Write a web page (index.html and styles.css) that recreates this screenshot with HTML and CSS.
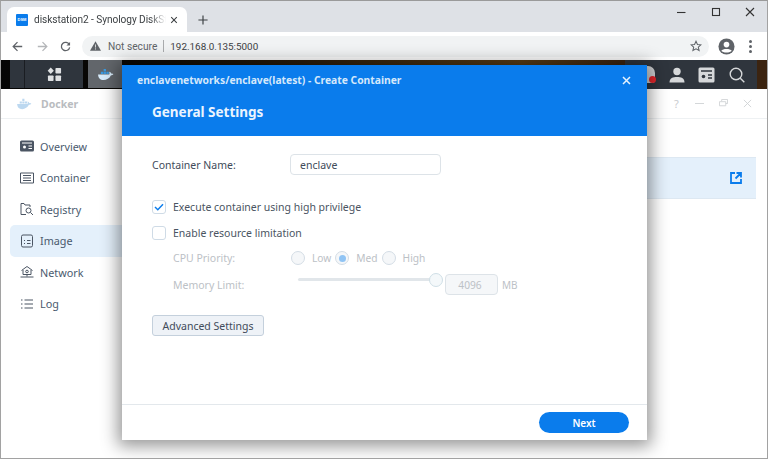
FILE: index.html
```html
<!DOCTYPE html>
<html lang="en">
<head>
<meta charset="utf-8">
<title>Create Container</title>
<link rel="stylesheet" href="styles.css">
</head>
<body>
<div class="frame">
  <div class="tabstrip">
    <div class="tab">
      <span class="favicon">DSM</span>
      <span class="tab-title">diskstation2 - Synology DiskStation</span>
      <svg class="tab-close" viewBox="0 0 10 10"><path d="M1.5 1.5l7 7M8.5 1.5l-7 7"/></svg>
    </div>
    <svg class="newtab" viewBox="0 0 12 12"><path d="M6 .5v11M.5 6h11"/></svg>
    <div class="winctl">
      <svg viewBox="0 0 10 10"><path d="M1 5.500h8.500"/></svg>
      <svg viewBox="0 0 10 10"><rect x="1.500" y="1.500" width="7" height="7"/></svg>
      <svg viewBox="0 0 10 10"><path d="M1 1l8 8M9 1l-8 8"/></svg>
    </div>
  </div>
  <div class="toolbar">
    <svg class="nav" viewBox="0 0 14 14"><path d="M13 7H2M7 1.500L1.500 7 7 12.500"/></svg>
    <svg class="nav dim" viewBox="0 0 14 14"><path d="M1 7h11M7 1.500L12.500 7 7 12.500"/></svg>
    <svg class="nav" viewBox="0 0 14 14"><path d="M11.800 4.500A5.300 5.300 0 1 0 12.300 8"/><path class="solid" d="M12.800 1.200v4.600H8.200z"/></svg>
    <div class="omnibox">
      <svg class="warn" viewBox="0 0 14 12"><path d="M7 0l7 12H0z"/><path class="warn-mark" d="M7 4v4M7 9v1.500"/></svg>
      <span class="insecure">Not secure</span>
      <span class="omni-sep"></span>
      <span class="url">192.168.0.135:5000</span>
      <svg class="star" viewBox="0 0 14 14"><path d="M7 1.500l1.700 3.700 4 .4-3 2.700.9 4L7 10.300l-3.600 2 .9-4-3-2.700 4-.4z"/></svg>
    </div>
    <svg class="avatar" viewBox="0 0 18 18"><circle cx="9" cy="9" r="8.500"/><circle class="cut" cx="9" cy="7" r="3"/><path class="cut" d="M3.500 13.500c1.500-2.500 9.500-2.500 11 0C13 16 5 16 3.500 13.500z"/></svg>
    <div class="kebab"><i></i><i></i><i></i></div>
  </div>
  <div class="taskbar">
    <div class="task-left">
      <div class="task-home">
        <svg viewBox="0 0 16 16"><path d="M4 .5L7.300 4 4 7.400.7 4z"/><rect x="9" y="1" width="6" height="6" rx=".8"/><rect x="1" y="9" width="6" height="6" rx=".8"/><rect x="9" y="9" width="6" height="6" rx=".8"/></svg>
      </div>
    </div>
    <div class="task-docker">
      <svg viewBox="0 0 18 14"><path class="whale" d="M1 7h12c.5-1 .5-2 0-3 1 0 2 1 2 2 1-.4 2 0 2.500.5-.6 1.200-1.600 1.500-2.800 1.500C13.500 11 10 13 7 13 3 13 1.200 10.500 1 7z"/><path class="boxes" d="M4 4h2.500v2.500H4zM7 4h2.500v2.500H7zM7 1h2.500v2.500H7zM10 4h2.500v2.500H10z"/></svg>
    </div>
    <div class="task-right">
      <span class="notify"><i></i></span>
      <svg class="person" viewBox="0 0 16 16"><circle cx="8" cy="4.500" r="3.700"/><path d="M.5 15.500c0-4.500 3.500-5.500 7.500-5.500s7.500 1 7.500 5.500z"/></svg>
      <svg class="card" viewBox="0 0 17 16"><rect x=".5" y=".5" width="16" height="15" rx="1.500"/><path class="cut-s" d="M3 4h11M10 8h4M10 11h4"/><circle class="cut-f" cx="5.500" cy="9.500" r="1.800"/></svg>
      <svg class="search" viewBox="0 0 16 16"><circle cx="7" cy="7" r="5.800"/><path d="M11.300 11.300l4 4"/></svg>
    </div>
  </div>
  <div class="dsm-window">
    <div class="win-title">
      <svg class="docker-logo" viewBox="0 0 18 14"><path d="M1 7h12c.5-1 .5-2 0-3 1 0 2 1 2 2 1-.4 2 0 2.500.5-.6 1.200-1.600 1.500-2.800 1.500C13.500 11 10 13 7 13 3 13 1.200 10.500 1 7z"/><path d="M4 4h2.500v2.500H4zM7 4h2.500v2.500H7zM7 1h2.500v2.500H7zM10 4h2.500v2.500H10z"/></svg>
      <span class="win-name">Docker</span>
      <div class="win-btns">
        <span class="q">?</span>
        <svg viewBox="0 0 10 10"><path d="M0 5h10"/></svg>
        <svg viewBox="0 0 10 10"><path d="M3 2.500V.5h6.500v4.500H7.500M.5 3h7v4.500h-7z"/></svg>
        <svg viewBox="0 0 10 10"><path d="M1 1l8 8M9 1l-8 8"/></svg>
      </div>
    </div>
    <div class="win-body">
      <nav class="side">
        <div class="side-item">
          <svg viewBox="0 0 14 12"><rect width="14" height="11" y=".5" rx="1.500" class="fill"/><path class="cutline" d="M2 3h10M8.500 6h3.500M8.500 8.500h3.500"/><circle cx="4.500" cy="7" r="1.500" class="cutfill"/></svg>
          <span>Overview</span>
        </div>
        <div class="side-item">
          <svg viewBox="0 0 14 12"><path d="M.5 1h13v10H.5zM3 3.500h8M3 6h8M3 8.500h8"/></svg>
          <span>Container</span>
        </div>
        <div class="side-item">
          <svg viewBox="0 0 14 14"><path d="M6 12.500H1V1.500h3l1 1.500h5v2"/><circle cx="8.500" cy="8.500" r="2.500"/><path d="M10.500 10.500l2.500 2.500"/></svg>
          <span>Registry</span>
        </div>
        <div class="side-item active">
          <svg viewBox="0 0 14 14"><rect x="1.500" y="1" width="11" height="12" rx="1.500"/><path d="M4 6.500h1M7 6.500h3.500M4 9.500h1M7 9.500h3.500"/></svg>
          <span>Image</span>
        </div>
        <div class="side-item">
          <svg viewBox="0 0 14 14"><path d="M1.500 5.500L7 1.500l5.500 4M3 5v4.500h8V5M7 9.500v2M.5 12h13"/><circle cx="7" cy="6.500" r="1.300"/></svg>
          <span>Network</span>
        </div>
        <div class="side-item">
          <svg viewBox="0 0 14 12"><path d="M1 2h1.500M4.500 2H13M1 6h1.500M4.500 6H13M1 10h1.500M4.500 10H13"/></svg>
          <span>Log</span>
        </div>
      </nav>
      <main class="win-main">
        <div class="image-row">
          <svg viewBox="0 0 12 12"><path class="open-line" d="M5 1H1v10h10V7M5.500 6.500L10 2M6.500 1H11v4.500"/></svg>
        </div>
      </main>
    </div>
  </div>

  <section class="modal">
    <header class="modal-head">
      <div class="modal-top">
        <span class="modal-caption">enclavenetworks/enclave(latest) - Create Container</span>
        <svg class="modal-x" viewBox="0 0 9 9"><path d="M1 1l7 7M8 1L1 8"/></svg>
      </div>
      <h1 class="modal-title">General Settings</h1>
    </header>
    <div class="modal-body">
      <div class="name-row">
        <label class="name-label">Container Name:</label>
        <div class="input name-input">enclave</div>
      </div>
      <div class="check-row first">
        <span class="check"><svg viewBox="0 0 12 10"><path d="M1 5l3.500 3.500L11 1.500"/></svg></span>
        <span>Execute container using high privilege</span>
      </div>
      <div class="check-row">
        <span class="check"></span>
        <span>Enable resource limitation</span>
      </div>
      <div class="cpu-row muted">
        <span class="sub-label">CPU Priority:</span>
        <span class="radio"></span><span class="radio-text">Low</span>
        <span class="radio on"></span><span class="radio-text">Med</span>
        <span class="radio"></span><span class="radio-text">High</span>
      </div>
      <div class="mem-row muted">
        <span class="sub-label">Memory Limit:</span>
        <span class="slider"><i></i></span>
        <div class="input mem-input">4096</div>
        <span class="unit">MB</span>
      </div>
      <button class="adv" type="button">Advanced Settings</button>
    </div>
    <footer class="modal-foot">
      <button class="next" type="button">Next</button>
    </footer>
  </section>
</div>
</body>
</html>
```

FILE: styles.css
```css
* { box-sizing: border-box; }
html, body { margin: 0; padding: 0; }
body { width: 768px; height: 459px; overflow: hidden; background: #fff; font-family: "Noto Sans", sans-serif; }
svg { display: block; fill: none; }

.frame { position: relative; width: 768px; height: 459px; border: 1px solid #a2a2a2; border-top-color: #9a9a9a; overflow: hidden; display: flex; flex-direction: column; }

.tabstrip { height: 31px; background: #dee1e6; display: flex; align-items: flex-end; flex: none; }
.tab { width: 180px; height: 25px; margin-left: 6px; background: #fff; border-radius: 7px 7px 0 0; display: flex; align-items: center; padding: 0 8px 0 9px; }
.favicon { width: 12px; height: 12px; background: #0a7cec; color: #fff; font: 700 4px "Liberation Sans", sans-serif; display: flex; align-items: center; justify-content: center; flex: none; border-radius: 1px; }
.tab-title { margin-left: 6px; font: 10.100px Roboto, sans-serif; letter-spacing: -.05px; color: #3c4043; white-space: nowrap; overflow: hidden; width: 132px; flex: none; -webkit-mask-image: linear-gradient(90deg, #000 88%, transparent); mask-image: linear-gradient(90deg, #000 88%, transparent); }
.tab-close { width: 8px; height: 8px; margin-left: 4px; stroke: #3c4043; stroke-width: 1.300; flex: none; }
.newtab { width: 10px; height: 10px; margin: 0 0 7px 11px; stroke: #3c4043; stroke-width: 1.400; }
.winctl { margin-left: auto; align-self: flex-start; display: flex; gap: 24.500px; padding: 6px 12px 0 0; }
.winctl svg { width: 10px; height: 10px; stroke: #333; stroke-width: 1.100; }

.toolbar { height: 28px; background: #fff; display: flex; align-items: center; padding: 0 0 0 11px; flex: none; }
.nav { width: 11px; height: 11px; margin-right: 14px; stroke: #5f6368; stroke-width: 1.600; flex: none; }
.nav .solid { fill: #5f6368; stroke: none; }
.nav.dim { stroke: #b4b6b9; margin-right: 12px; }
.nav:nth-of-type(3) { margin-right: 11px; }
.omnibox { width: 627px; height: 21px; border-radius: 11px; background: #f1f3f4; display: flex; align-items: center; padding: 0 7px 0 8px; flex: none; }
.warn { width: 11px; height: 10px; fill: #5f6368; margin-right: 7px; flex: none; }
.warn-mark { stroke: #f1f3f4; stroke-width: 1; }
.insecure { font: 10.200px Roboto, sans-serif; color: #5f6368; }
.omni-sep { width: 1px; height: 12px; background: #a9abad; margin: 0 6px; }
.url { font: 9.900px Roboto, sans-serif; color: #3c4043; }
.star { width: 12px; height: 12px; margin-left: auto; stroke: #5f6368; stroke-width: 1.200; }
.avatar { width: 17px; height: 17px; margin-left: 9px; fill: #5f6368; flex: none; }
.avatar .cut { fill: #fff; }
.kebab { display: flex; flex-direction: column; gap: 2px; margin-left: 14px; }
.kebab i { width: 3px; height: 3px; border-radius: 50%; background: #5f6368; display: block; }

.taskbar { height: 29px; flex: none; display: flex; padding-left: 9px; background: linear-gradient(90deg, #050505 0, #0a0805 130px, #2a1c0a 300px, #5a3c14 520px, #3c2410 620px); }
.task-left { width: 73px; background: #2f353d; display: flex; padding-left: 14px; height: 28px; }
.task-home { width: 59px; border-left: 1px solid #1a1d22; display: flex; align-items: center; justify-content: center; }
.task-home svg { width: 15px; height: 15px; fill: #dfe1e3; }
.task-docker { width: 34px; height: 28px; margin-left: 5px; background: #62666b; display: flex; align-items: center; padding-left: 9px; }
.task-docker svg { width: 17px; height: 13px; }
.whale { fill: #d8ecfb; }
.boxes { fill: #3a9ae0; }
.task-right { position: absolute; top: 59px; left: 624px; width: 132px; height: 29px; background: #2f353d; display: flex; align-items: center; gap: 13.500px; padding-left: 15px; }
.task-right svg { width: 16px; height: 16px; fill: #d6d8da; flex: none; }
.task-right .card { width: 17px; }
.task-right .search { fill: none; stroke: #d6d8da; stroke-width: 1.400; }
.task-right .cut-s { stroke: #2f353d; stroke-width: 1.300; }
.task-right .cut-f { fill: #2f353d; }
.notify { width: 15px; height: 17px; background: #cfd1d3; border-radius: 7px 7px 3px 3px; position: relative; flex: none; }
.notify i { position: absolute; right: -1px; bottom: 0; width: 7px; height: 7px; border-radius: 50%; background: #e8262b; }

.dsm-window { flex: 1; background: #fff; display: flex; flex-direction: column; min-height: 0; }
.win-title { height: 30px; flex: none; display: flex; align-items: center; padding: 0 15px 0 15px; border-bottom: 1px solid #eef1f3; }
.docker-logo { width: 16px; height: 12px; fill: #bcd8f0; }
.win-name { font: 700 10.500px "Noto Sans", sans-serif; color: #b9bcc0; margin-left: 9px; }
.win-btns { margin-left: auto; display: flex; align-items: center; gap: 15px; }
.q { font: 11px "Noto Sans", sans-serif; color: #c9cccf; width: 6px; }
.win-btns svg { width: 9px; height: 9px; stroke: #cfd2d5; stroke-width: 1; }
.win-body { flex: 1; display: flex; min-height: 0; }
.side { width: 121px; padding: 11.500px 0 0 9px; flex: none; }
.side-item { height: 31.500px; display: flex; align-items: center; padding-left: 10px; border-radius: 5px 0 0 5px; font: 10.800px "Noto Sans", sans-serif; color: #4a5a6e; }
.side-item svg { width: 14px; height: 14px; stroke: #4b5563; stroke-width: 1; margin-right: 6px; flex: none; }
.side-item svg .fill { fill: #4b5563; stroke: none; }
.side-item svg .cutline { stroke: #fff; }
.side-item svg .cutfill { fill: #fff; stroke: none; }
.side-item.active { background: #e4f0fb; }
.win-main { flex: 1; position: relative; padding: 38px 11px 0 0; }
.image-row { height: 42px; background: #e4f0fb; border-top: 1px solid #dde8f2; border-bottom: 1px solid #dde8f2; display: flex; align-items: center; justify-content: flex-end; padding-right: 14px; }
.image-row svg { width: 12px; height: 12px; }
.open-line { stroke: #0a7cec; stroke-width: 1.800; }

.modal { position: absolute; left: 121px; top: 64px; width: 525px; height: 375px; background: #fff; display: flex; flex-direction: column; box-shadow: 0 2px 16px 4px rgba(0, 0, 0, .42); }
.modal-head { height: 71px; background: #0a7cec; padding: 0 16px 0 15px; flex: none; }
.modal-top { display: flex; align-items: center; justify-content: space-between; height: 30px; }
.modal-caption { font: 700 10.300px "Noto Sans", sans-serif; color: #d5e8fb; white-space: nowrap; }
.modal-x { width: 9px; height: 9px; stroke: #e6f2fd; stroke-width: 1.500; }
.modal-title { margin: 9px 0 0 15px; font: 700 13.500px/16px "Noto Sans", sans-serif; color: #eaf4fe; }
.modal-body { flex: 1; padding: 18px 30px 0; font: 10.500px "Noto Sans", sans-serif; color: #4a5462; }
.name-row { display: flex; align-items: center; }
.name-label { width: 138px; color: #414b5a; }
.input { border: 1px solid #dde3e8; border-radius: 4px; display: flex; align-items: center; }
.name-input { width: 151px; height: 21px; padding-left: 9px; color: #414b5a; }
.check-row { display: flex; align-items: center; height: 16px; margin-top: 10px; }
.check-row.first { margin-top: 24px; }
.check { width: 14px; height: 14px; border: 1px solid #cfdbe6; border-radius: 3px; margin-right: 7px; display: flex; align-items: center; justify-content: center; background: #fff; }
.check svg { width: 10px; height: 8px; stroke: #0a7cec; stroke-width: 1.800; }
.muted { color: #bcc1c6; }
.cpu-row { display: flex; align-items: center; height: 16px; margin: 9px 0 0 21px; }
.sub-label { width: 118px; flex: none; }
.radio { width: 14px; height: 14px; border: 1px solid #d4dde5; border-radius: 50%; background: #f5f7f9; flex: none; position: relative; }
.radio.on::after { content: ""; position: absolute; left: 2.500px; top: 2.500px; width: 7px; height: 7px; border-radius: 50%; background: #90c4f4; }
.radio-text { margin: 0 4px 0 7px; font-size: 10.200px; }
.mem-row { display: flex; align-items: center; height: 21px; margin: 8px 0 0 21px; }
.mem-row .sub-label { width: 125px; }
.slider { width: 138px; height: 3px; background: #e1e6ea; border-radius: 2px; position: relative; margin-top: -10px; flex: none; }
.slider i { position: absolute; right: -7px; top: -5.500px; width: 14px; height: 14px; border-radius: 50%; border: 1px solid #cfdfe6; background: #f4f8fa; }
.mem-input { width: 53px; height: 21px; background: #f5f7f9; justify-content: center; margin-left: 9px; padding-right: 3px; font-size: 10.200px; }
.unit { margin-left: 4px; font-size: 10px; }
.adv { display: block; margin-top: 20px; width: 112px; height: 21px; border: 1px solid #c4d0dc; border-radius: 3px; background: #eef2f7; padding: 0; font: 10.500px "Noto Sans", sans-serif; color: #414b5a; }
.modal-foot { height: 36px; border-top: 1px solid #e3e8ec; flex: none; display: flex; justify-content: flex-end; padding: 7px 18px 0 0; }
.next { width: 90px; height: 21px; border: 0; border-radius: 11px; background: #0a7cec; color: #fff; font: 600 10px "Noto Sans", sans-serif; padding: 0; }
```
